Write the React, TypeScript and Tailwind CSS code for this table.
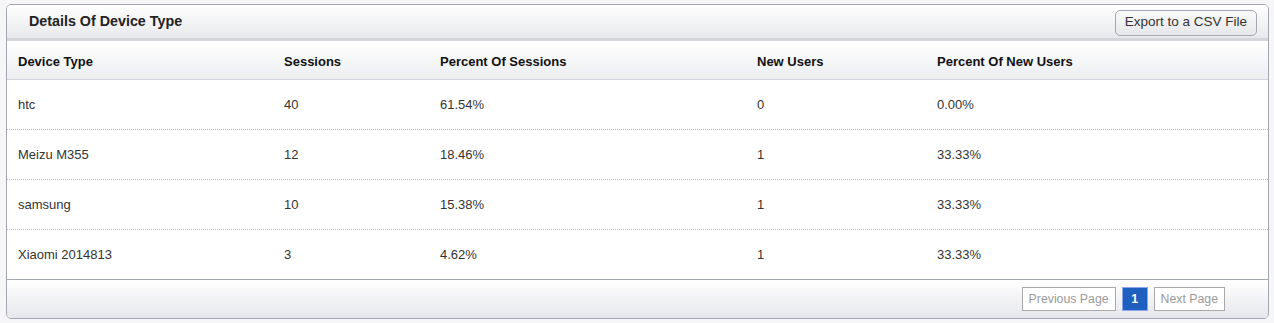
const rows = [
  { device: 'htc', sessions: '40', pct: '61.54%', newUsers: '0', pctNew: '0.00%' },
  { device: 'Meizu M355', sessions: '12', pct: '18.46%', newUsers: '1', pctNew: '33.33%' },
  { device: 'samsung', sessions: '10', pct: '15.38%', newUsers: '1', pctNew: '33.33%' },
  { device: 'Xiaomi 2014813', sessions: '3', pct: '4.62%', newUsers: '1', pctNew: '33.33%' },
];

const cols = ['w-[266px]', 'w-[156px]', 'w-[317px]', 'w-[180px]', 'flex-1'];

export default function App() {
  return (
    <div className="h-[323px] w-[1274px] bg-[#f6f6f8] pt-[4px] pl-[6px] font-['Liberation_Sans',Arial,sans-serif] text-[13px] text-[#333]">
      <div className="flex h-[315px] w-[1263px] flex-col overflow-hidden rounded-[5px] border border-[#a3a7b4] bg-white">
        {/* title bar */}
        <div className="flex h-[36px] shrink-0 items-center justify-between border-b-[3px] border-[#d3d5db] bg-gradient-to-b from-white to-[#e8e9ec] pl-[22px] pr-[11px]">
          <h2 className="mt-[1px] text-[14.3px] font-bold text-[#222]">Details Of Device Type</h2>
          <button className="mt-[2px] h-[26px] rounded-[5px] border border-[#a3a7b4] bg-gradient-to-b from-[#fafafa] to-[#e6e7ea] px-[9px] text-[13.5px] text-[#333]">
            Export to a CSV File
          </button>
        </div>

        {/* table head */}
        <div className="flex h-[39px] shrink-0 items-center border-b border-[#d0d4dd] bg-gradient-to-b from-white to-[#eceef1] pt-[3px] font-bold text-[#111]">
          {['Device Type', 'Sessions', 'Percent Of Sessions', 'New Users', 'Percent Of New Users'].map((h, i) => (
            <div key={h} className={`${cols[i]} pl-[11px]`}>
              {h}
            </div>
          ))}
        </div>

        {/* rows */}
        {rows.map((r, idx) => (
          <div
            key={r.device}
            className={`flex h-[50px] shrink-0 items-center ${
              idx === rows.length - 1 ? 'border-b border-[#a3a7b4]' : 'border-b border-dotted border-[#bdbdbd]'
            }`}
          >
            {[r.device, r.sessions, r.pct, r.newUsers, r.pctNew].map((v, i) => (
              <div key={i} className={`${cols[i]} pl-[11px]`}>
                {v}
              </div>
            ))}
          </div>
        ))}

        {/* footer / pagination */}
        <div className="flex flex-1 items-center justify-end gap-[6px] bg-gradient-to-b from-white to-[#e6e7eb] pr-[43px] text-[12.3px]">
          <span className="flex h-[24px] items-center border border-[#a9a9a9] bg-white px-[6px] text-[#9a9a9a]">
            Previous Page
          </span>
          <span className="flex h-[24px] w-[26px] items-center justify-center border border-[#8fa4f0] bg-[#1f5fbf] font-bold text-white">
            1
          </span>
          <span className="flex h-[24px] items-center border border-[#a9a9a9] bg-white px-[6px] text-[#9a9a9a]">
            Next Page
          </span>
        </div>
      </div>
    </div>
  );
}
